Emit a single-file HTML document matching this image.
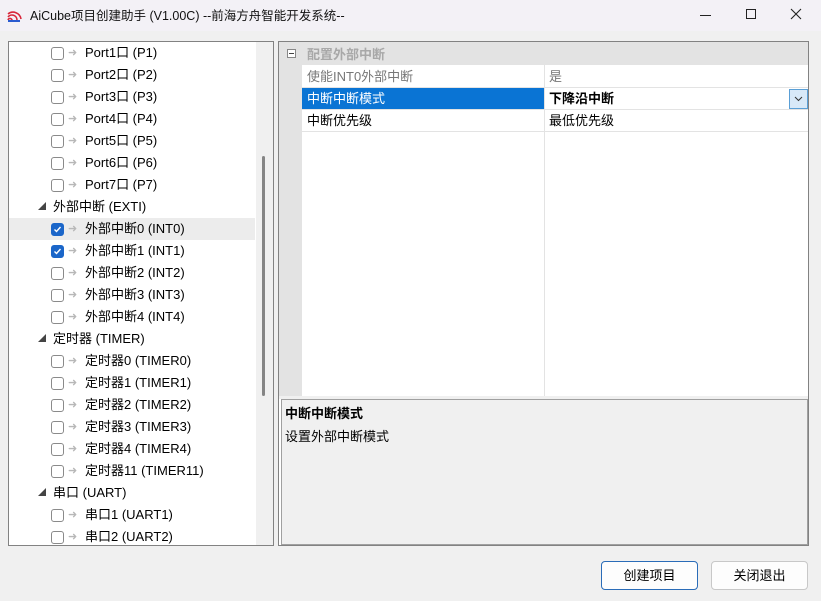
<!DOCTYPE html>
<html><head><meta charset="utf-8"><style>
*{box-sizing:border-box;margin:0;padding:0}
body{width:821px;height:601px;background:#f0f0f0;font-family:"Liberation Sans","Noto Sans CJK SC",sans-serif;font-size:13px;color:#000;position:relative;overflow:hidden}
.abs{position:absolute}
.title{left:0;top:0;width:821px;height:31px;background:#f3f1f6}
.title .t{left:30px;top:5px;font-size:12.5px;color:#111}
#left{left:8px;top:41px;width:266px;height:505px;background:#fff;border:1px solid #828282;overflow:hidden}
.row{position:absolute;left:0;height:22px;width:246px;line-height:22px;white-space:nowrap}
.cb{position:absolute;top:5px;width:13px;height:13px;border:1px solid #8a8a8a;border-radius:3px;background:#fff}
.cb.on{background:#1b66c9;border-color:#1b66c9}
.arr{position:absolute;top:0;color:#b8b8b8;font-size:11px}
.tri{position:absolute;top:0;font-size:8px;color:#444}
#right{left:278px;top:41px;width:531px;height:505px;background:#fff;border:1px solid #828282}
.btn{top:561px;width:97px;height:29px;border:1px solid #c8c8c8;border-radius:4px;background:#fdfdfd;text-align:center;line-height:27px;font-size:13px}
</style></head><body>
<div class="abs title">
<svg class="abs" style="left:7px;top:8px" width="15" height="15" viewBox="0 0 15 15"><path d="M1 6a8 8 0 0 1 13 5M1 9a5 5 0 0 1 9 3M1 12a2 2 0 0 1 4 1" stroke="#d8263a" stroke-width="1.6" fill="none"/><rect x="1" y="12" width="12" height="2" fill="#2a5bd0"/></svg>
<div class="abs t">AiCube项目创建助手 (V1.00C) --前海方舟智能开发系统--</div>
<div class="abs" style="left:700px;top:15px;width:11px;height:1px;background:#222"></div>
<div class="abs" style="left:746px;top:9px;width:10px;height:10px;border:1px solid #222"></div>
<svg class="abs" style="left:790px;top:8px" width="12" height="12"><path d="M1 1L11 11M11 1L1 11" stroke="#222" stroke-width="1.1"/></svg>
</div>
<div class="abs" id="left">
<div class="abs" style="left:247px;top:0;width:17px;height:503px;background:#f0f0f0"></div>
<div class="abs" style="left:253px;top:114px;width:3px;height:240px;background:#858585;border-radius:2px"></div>
<div class="row" style="top:176px;background:#ececec;top:176px"></div>
<div id="rows"></div>
</div>
<div class="abs" id="right">
<div class="abs" style="left:0;top:0;width:529px;height:23px;background:#e3e3e3"></div>
<div class="abs" style="left:0;top:23px;width:23px;height:331px;background:#e3e3e3"></div>
<div class="abs" style="left:8px;top:7px;width:9px;height:9px;border:1px solid #888;background:#fff"></div>
<div class="abs" style="left:10px;top:11px;width:5px;height:1px;background:#444"></div>
<div class="abs" style="left:28px;top:2px;color:#a8a8a8;font-weight:bold">配置外部中断</div>
<div class="abs" style="left:23px;top:45px;width:242px;height:22px;background:#0a74d4"></div>
<div class="abs" style="left:23px;top:45px;width:506px;height:1px;background:#e3e3e3"></div>
<div class="abs" style="left:23px;top:67px;width:506px;height:1px;background:#e3e3e3"></div>
<div class="abs" style="left:23px;top:89px;width:506px;height:1px;background:#e3e3e3"></div>
<div class="abs" style="left:265px;top:23px;width:1px;height:331px;background:#e3e3e3"></div>
<div class="abs" style="left:28px;top:24px;color:#777">使能INT0外部中断</div>
<div class="abs" style="left:270px;top:24px;color:#777">是</div>
<div class="abs" style="left:28px;top:46px;color:#fff">中断中断模式</div>
<div class="abs" style="left:270px;top:46px;font-weight:bold">下降沿中断</div>
<div class="abs" style="left:510px;top:47px;width:19px;height:20px;border:1px solid #5a9fd6;background:#d8e9f8"></div>
<svg class="abs" style="left:515px;top:54px" width="9" height="6"><path d="M1 1L4.5 4.5L8 1" stroke="#333" fill="none"/></svg>
<div class="abs" style="left:28px;top:68px">中断优先级</div>
<div class="abs" style="left:270px;top:68px">最低优先级</div>
<div class="abs" style="left:0;top:354px;width:529px;height:3px;background:#f0f0f0"></div>
<div class="abs" style="left:2px;top:357px;width:527px;height:146px;background:#f0f0f0;border:1px solid #a0a0a0"></div>
<div class="abs" style="left:6px;top:361px;font-weight:bold">中断中断模式</div>
<div class="abs" style="left:6px;top:384px">设置外部中断模式</div>
</div>
<div class="abs btn" style="left:601px;border-color:#2a6cb8">创建项目</div>
<div class="abs btn" style="left:711px">关闭退出</div>
<script>
var items=[
[2,0,"Port1口 (P1)"],[2,0,"Port2口 (P2)"],[2,0,"Port3口 (P3)"],[2,0,"Port4口 (P4)"],[2,0,"Port5口 (P5)"],[2,0,"Port6口 (P6)"],[2,0,"Port7口 (P7)"],
[1,0,"外部中断 (EXTI)"],[2,1,"外部中断0 (INT0)"],[2,1,"外部中断1 (INT1)"],[2,0,"外部中断2 (INT2)"],[2,0,"外部中断3 (INT3)"],[2,0,"外部中断4 (INT4)"],
[1,0,"定时器 (TIMER)"],[2,0,"定时器0 (TIMER0)"],[2,0,"定时器1 (TIMER1)"],[2,0,"定时器2 (TIMER2)"],[2,0,"定时器3 (TIMER3)"],[2,0,"定时器4 (TIMER4)"],[2,0,"定时器11 (TIMER11)"],
[1,0,"串口 (UART)"],[2,0,"串口1 (UART1)"],[2,0,"串口2 (UART2)"]];
var h="";items.forEach(function(it,i){var top=i*22+0;
if(it[0]==1){h+='<div class="row" style="top:'+top+'px"><span class="tri" style="left:29px">&#9698;</span><span class="abs" style="left:44px">'+it[2]+'</span></div>';}
else{h+='<div class="row" style="top:'+top+'px"><span class="cb'+(it[1]?' on':'')+'" style="left:42px">'+(it[1]?'<svg width="11" height="11" style="position:absolute;left:0;top:0"><path d="M2.5 5.5L4.5 7.5L8.5 3" stroke="#fff" stroke-width="1.4" fill="none"/></svg>':'')+'</span><span class="arr" style="left:59px">&#10140;</span><span class="abs" style="left:76px">'+it[2]+'</span></div>';}});
document.getElementById("rows").innerHTML=h;
</script>
</body></html>
